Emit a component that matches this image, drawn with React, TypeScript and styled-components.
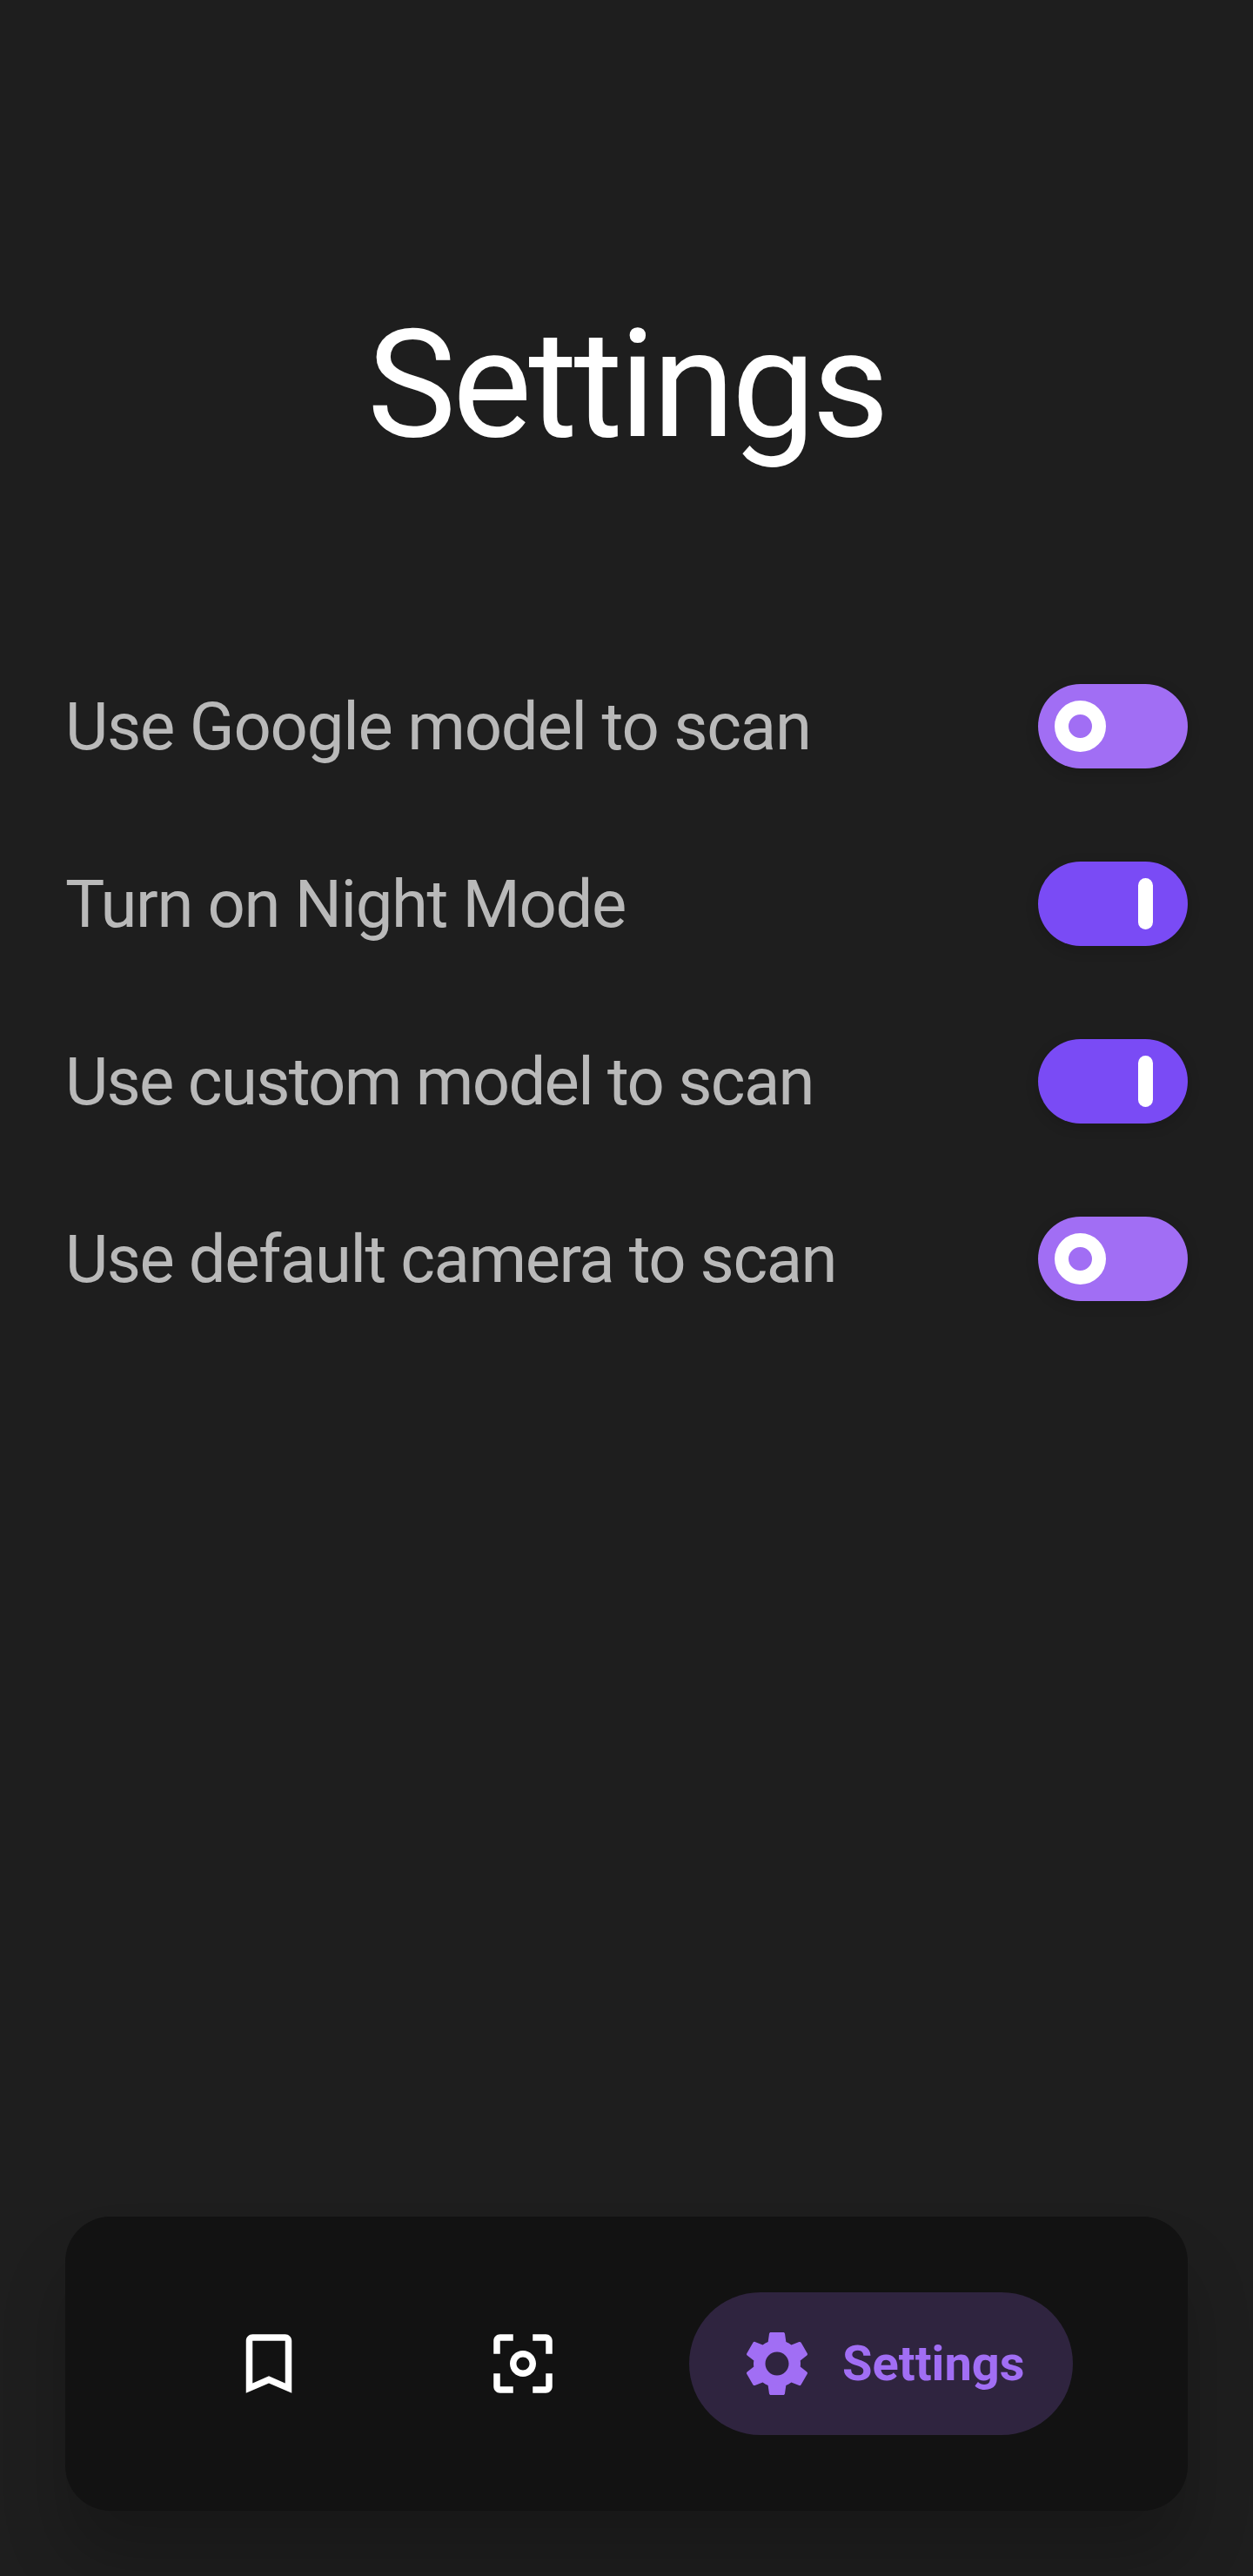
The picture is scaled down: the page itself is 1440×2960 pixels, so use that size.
import React, { useState } from "react";
import styled, { createGlobalStyle } from "styled-components";

const GlobalStyle = createGlobalStyle`
  * { box-sizing: border-box; }
  body { margin: 0; background: #1e1e1e; }
`;

const Screen = styled.main`
  display: flex;
  flex-direction: column;
  width: 1440px;
  height: 2960px;
  padding: 342px 75px 75px;
  overflow: hidden;
  background: #1e1e1e;
  font-family: Roboto, "Open Sans", sans-serif;
`;

const Title = styled.h1`
  margin: 0 0 190.5px;
  height: 200px;
  line-height: 200px;
  text-align: center;
  font-size: 172px;
  font-weight: 400;
  letter-spacing: -4px;
  color: #fff;
`;

const Options = styled.ul`
  display: flex;
  flex-direction: column;
  margin: 0;
  padding: 0;
  list-style: none;
`;

const Option = styled.li`
  display: flex;
  align-items: center;
  justify-content: space-between;
  height: 204px;
`;

const OptionLabel = styled.span<{ $tracking: number }>`
  font-size: 76px;
  line-height: 90px;
  letter-spacing: ${(p) => p.$tracking}px;
  white-space: nowrap;
  color: #b9b9b9;
`;

const Switch = styled.button<{ $on: boolean }>`
  display: flex;
  align-items: center;
  justify-content: ${(p) => (p.$on ? "flex-end" : "flex-start")};
  width: 172px;
  height: 97px;
  padding: ${(p) => (p.$on ? "0 40px 0 0" : "0 0 0 19px")};
  border: 0;
  border-radius: 49px;
  background: ${(p) => (p.$on ? "#7a4bf5" : "#a16ef4")};
  box-shadow: 0 4px 15px rgba(0, 0, 0, 0.16);
`;

const Ring = styled.span`
  width: 59px;
  height: 59px;
  border: 16px solid #fff;
  border-radius: 50%;
`;

const Bar = styled.span`
  width: 17px;
  height: 59px;
  border-radius: 9px;
  background: #fff;
`;

const Nav = styled.nav`
  display: flex;
  align-items: center;
  height: 338px;
  margin-top: auto;
  padding-left: 189px;
  border-radius: 52px;
  background: #121212;
  box-shadow: 0 56px 75px rgba(0, 0, 0, 0.2);
`;

const NavItem = styled.button`
  display: flex;
  margin-right: 202px;
  padding: 0;
  border: 0;
  background: none;
  color: #fff;
`;

const ActiveItem = styled(NavItem)`
  align-items: center;
  width: 441px;
  height: 164px;
  margin: 0 0 0 -56px;
  padding-left: 56px;
  gap: 30px;
  border-radius: 82px;
  background: #2f243f;
  color: #a16ef4;
`;

const NavLabel = styled.span`
  font-family: Roboto, sans-serif;
  font-size: 56px;
  font-weight: 700;
  line-height: 66px;
`;

const Glyph = styled.svg`
  display: block;
  flex: none;
  width: 90px;
  height: 90px;
  fill: currentColor;
`;

const initialOptions = [
  { label: "Use Google model to scan", on: false, tracking: -1.2 },
  { label: "Turn on Night Mode", on: true, tracking: -1.35 },
  { label: "Use custom model to scan", on: true, tracking: -1.7 },
  { label: "Use default camera to scan", on: false, tracking: -1.45 },
];

export default function App() {
  const [options, setOptions] = useState(initialOptions);
  const toggle = (index: number) =>
    setOptions(options.map((o, i) => (i === index ? { ...o, on: !o.on } : o)));

  return (
    <Screen>
      <GlobalStyle />
      <Title>Settings</Title>
      <Options>
        {options.map((o, i) => (
          <Option key={o.label}>
            <OptionLabel $tracking={o.tracking}>{o.label}</OptionLabel>
            <Switch $on={o.on} role="switch" aria-checked={o.on} onClick={() => toggle(i)}>
              {o.on ? <Bar /> : <Ring />}
            </Switch>
          </Option>
        ))}
      </Options>
      <Nav>
        <NavItem>
          <Glyph viewBox="0 0 24 24">
            <path d="M17 3H7c-1.1 0-2 .9-2 2v16l7-3 7 3V5c0-1.100-.9-2-2-2zm0 15l-5-2.180L7 18V5h10v13z" />
          </Glyph>
        </NavItem>
        <NavItem>
          <Glyph viewBox="0 0 24 24">
            <path d="M5 15H3v4c0 1.100.9 2 2 2h4v-2H5v-4zM5 5h4V3H5c-1.100 0-2 .9-2 2v4h2V5zm14-2h-4v2h4v4h2V5c0-1.100-.9-2-2-2zm0 16h-4v2h4c1.100 0 2-.9 2-2v-4h-2v4zM12 8c-2.210 0-4 1.790-4 4s1.790 4 4 4 4-1.790 4-4-1.790-4-4-4zm0 6c-1.100 0-2-.9-2-2s.9-2 2-2 2 .9 2 2-.9 2-2 2z" />
          </Glyph>
        </NavItem>
        <ActiveItem>
          <Glyph viewBox="0 0 24 24">
            <path d="M19.140 12.940c.04-.3.06-.61.06-.94 0-.32-.02-.64-.07-.94l2.030-1.580c.18-.14.23-.41.12-.61l-1.920-3.320c-.12-.22-.37-.29-.59-.22l-2.390.96c-.5-.38-1.030-.7-1.620-.94l-.36-2.540c-.04-.24-.24-.41-.48-.41h-3.840c-.24 0-.43.17-.47.41l-.36 2.540c-.59.24-1.130.57-1.620.94l-2.390-.96c-.22-.08-.47 0-.59.22L2.740 8.870c-.12.21-.08.47.12.61l2.030 1.580c-.05.3-.09.63-.09.94s.02.64.07.94l-2.030 1.580c-.18.14-.23.41-.12.61l1.920 3.320c.12.22.37.29.59.22l2.390-.96c.5.38 1.030.7 1.620.94l.36 2.540c.05.24.24.41.48.41h3.840c.24 0 .44-.17.47-.41l.36-2.540c.59-.24 1.130-.56 1.620-.94l2.390.96c.22.08.47 0 .59-.22l1.920-3.320c.12-.22.07-.47-.12-.61l-2.010-1.580zM12 15.600c-1.980 0-3.600-1.620-3.600-3.600s1.620-3.600 3.600-3.600 3.600 1.620 3.600 3.600-1.620 3.600-3.600 3.600z" />
          </Glyph>
          <NavLabel>Settings</NavLabel>
        </ActiveItem>
      </Nav>
    </Screen>
  );
}
